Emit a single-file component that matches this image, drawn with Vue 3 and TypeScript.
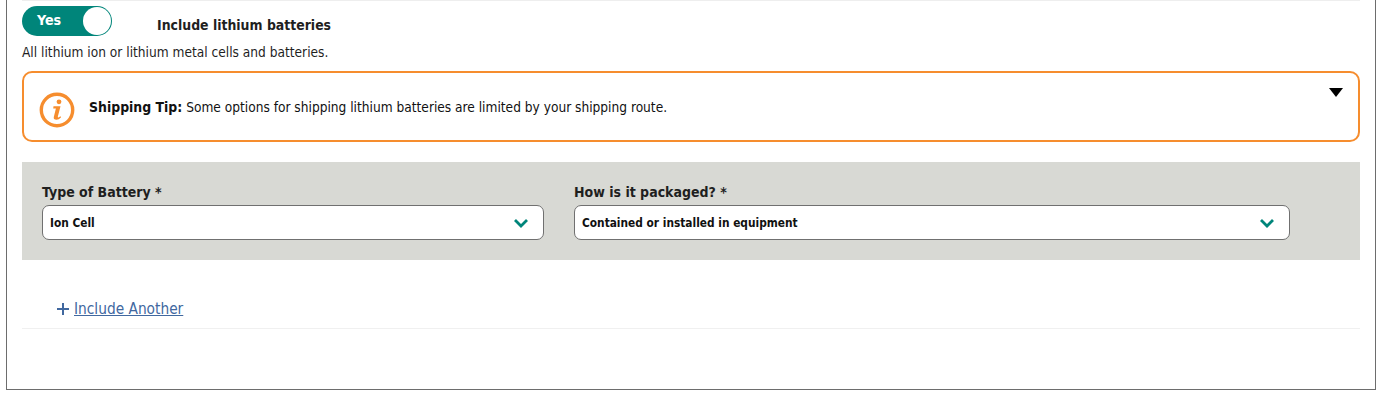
<script setup lang="ts">
const fields = [
  { label: 'Type of Battery *', value: 'Ion Cell', cls: 'first' },
  { label: 'How is it packaged? *', value: 'Contained or installed in equipment', cls: 'second' },
]
</script>

<template>
  <div class="frame">
    <div class="row-top">
      <div class="toggle">
        <span class="yes">Yes</span>
        <span class="knob"></span>
      </div>
      <span class="title">Include lithium batteries</span>
    </div>
    <p class="desc">All lithium ion or lithium metal cells and batteries.</p>
    <div class="tip">
      <svg class="info" width="36" height="36" viewBox="0 0 36 36">
        <circle cx="18" cy="18" r="15.7" fill="none" stroke="#f68d2e" stroke-width="3.4" />
        <circle cx="20" cy="9.800" r="2.400" fill="#f68d2e" />
        <path d="M14.500 14.200h7l-2.700 10.500c-.2.800.5 1 1.100.6l1.500-1 .7.900c-1.500 1.700-3 2.500-4.700 2.500-2.100 0-3-1.100-2.600-2.800l2.100-8.400h-2.700z" fill="#f68d2e" />
      </svg>
      <p class="tip-text"><b>Shipping Tip:</b> Some options for shipping lithium batteries are limited by your shipping route.</p>
      <svg class="caret" width="14" height="9" viewBox="0 0 14 9"><path d="M0 0h14L7 9z" fill="#000" /></svg>
    </div>
    <div class="panel">
      <div v-for="f in fields" :key="f.label" class="field" :class="f.cls">
        <label>{{ f.label }}</label>
        <div class="select">
          <span>{{ f.value }}</span>
          <svg width="16" height="10" viewBox="0 0 16 10"><path d="M2 2l6 6 6-6" fill="none" stroke="#00857a" stroke-width="2.800" /></svg>
        </div>
      </div>
    </div>
    <div class="include">
      <svg width="12" height="12" viewBox="0 0 12 12"><path d="M6 0v12M0 6h12" stroke="#41689f" stroke-width="2" /></svg>
      <a href="#" @click.prevent>Include Another</a>
    </div>
  </div>
</template>

<style scoped>
.frame {
  box-sizing: border-box;
  width: 1370px;
  height: 390px;
  margin-left: 6px;
  padding: 0 15px;
  border: 1px solid #6d6d6d;
  border-top: none;
  background: #fff;
  font-family: "DejaVu Sans Condensed", "DejaVu Sans", Verdana, sans-serif;
  font-stretch: condensed;
  color: #1f1f1f;
}
.row-top {
  display: flex;
  align-items: center;
  height: 42px;
  padding-top: 5px;
  padding-bottom: 7px;
  box-sizing: border-box;
  border-top: 1px solid #eeeeee;
}
.toggle {
  box-sizing: border-box;
  width: 90px;
  height: 30px;
  border-radius: 15px;
  background: #00857a;
  display: flex;
  align-items: center;
  justify-content: space-between;
  padding: 0 1px 0 15px;
}
.yes {
  color: #fff;
  font-weight: 700;
  font-size: 14.2px;
  margin-top: -2px;
}
.knob {
  width: 28px;
  height: 28px;
  border-radius: 50%;
  background: #fff;
}
.title {
  margin-left: 45px;
  font-weight: 700;
  font-size: 13.9px;
  margin-top: 8px;
}
.desc {
  margin: 1px 0 0;
  font-size: 13.6px;
  line-height: 18px;
}
.tip {
  box-sizing: border-box;
  display: flex;
  align-items: center;
  position: relative;
  height: 71px;
  margin-top: 10px;
  padding: 8px 0 0 15px;
  border: 2px solid #f68d2e;
  border-radius: 10px;
}
.info { flex: none; margin-top: -1px; }
.tip-text {
  margin: -8px 0 0 14px;
  font-size: 13.6px;
  color: #111;
}
.tip-text b { font-size: 13.9px; }
.caret {
  position: absolute;
  right: 15px;
  top: 15px;
}
.panel {
  display: flex;
  height: 98px;
  margin-top: 20px;
  padding: 21px 20px 0;
  box-sizing: border-box;
  background: #d8d9d4;
  gap: 30px;
}
.first { width: 502px; }
.second { width: 716px; }
label {
  display: block;
  font-weight: 700;
  font-size: 14px;
  line-height: 18px;
  margin-bottom: 4px;
}
.select {
  box-sizing: border-box;
  height: 35px;
  display: flex;
  align-items: center;
  justify-content: space-between;
  padding: 0 14px 0 7px;
  background: #fff;
  border: 1px solid #707070;
  border-radius: 7px;
  font-weight: 700;
  font-size: 11.8px;
  color: #111;
}
.include {
  display: flex;
  align-items: center;
  gap: 5px;
  height: 69px;
  box-sizing: border-box;
  padding: 29px 0 0 35px;
  border-bottom: 1px solid #f0f0f0;
  font-size: 15.3px;
}
.include a {
  color: #41689f;
  text-decoration: underline;
}
</style>
